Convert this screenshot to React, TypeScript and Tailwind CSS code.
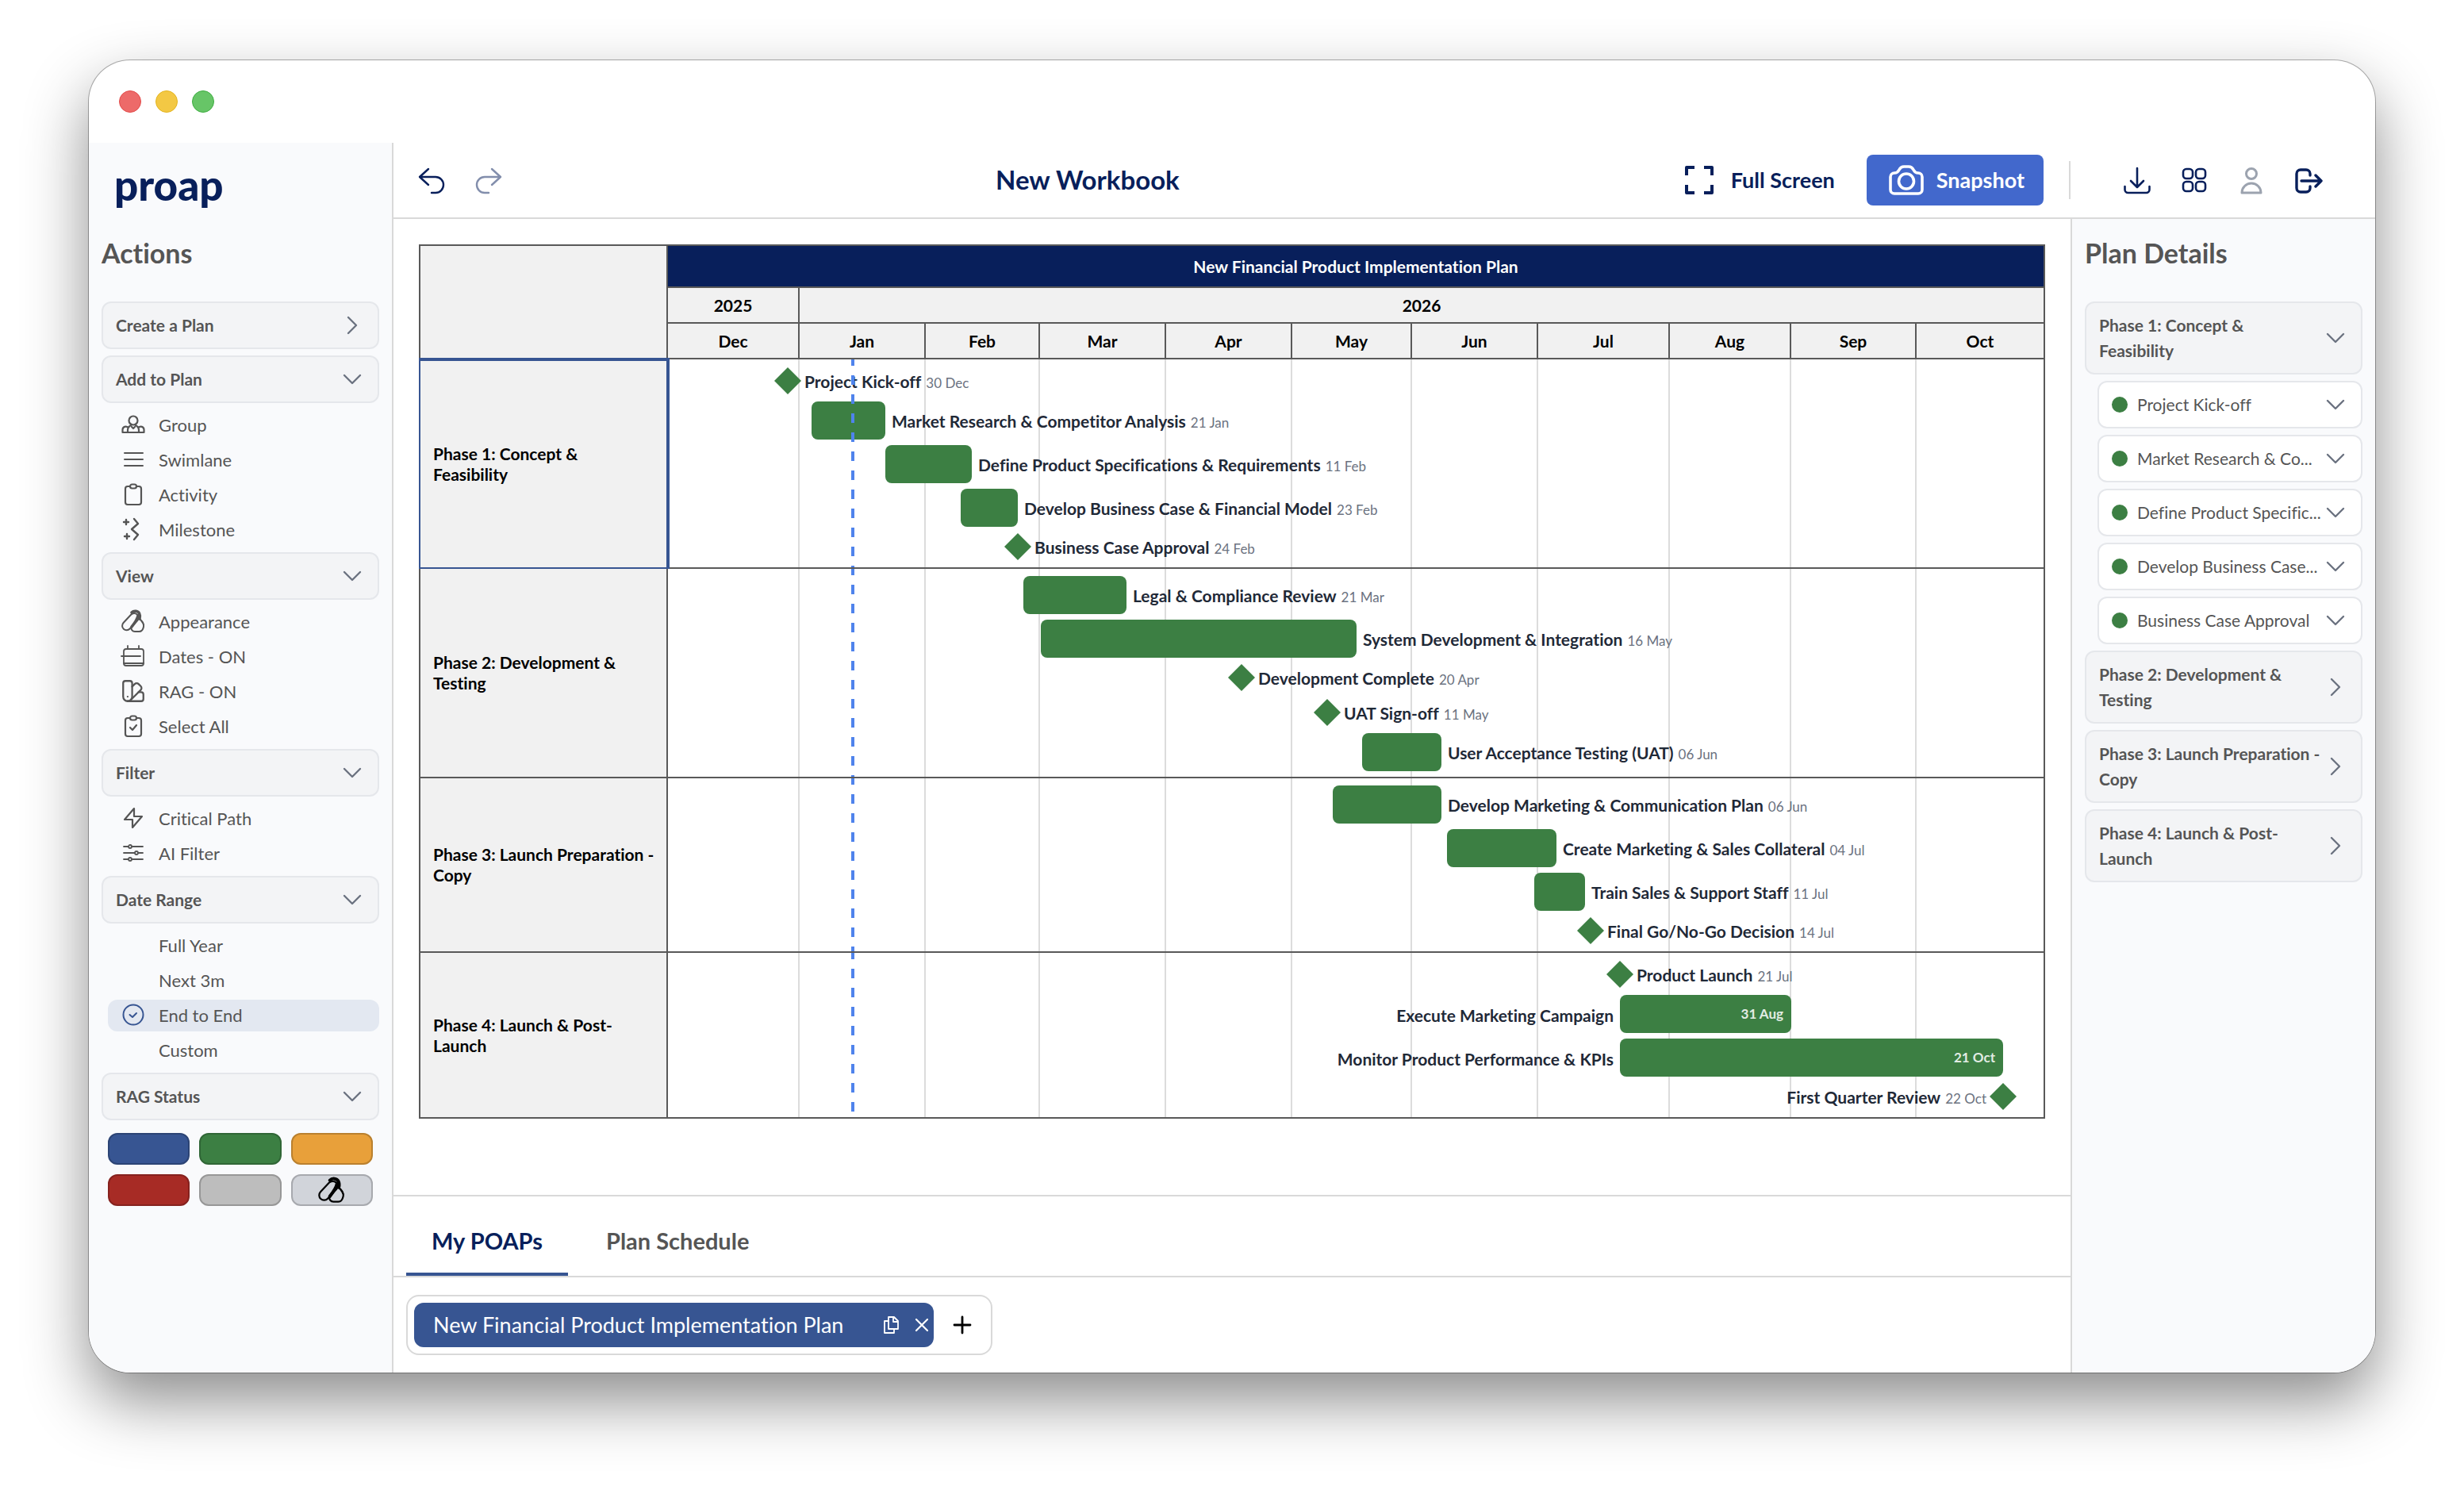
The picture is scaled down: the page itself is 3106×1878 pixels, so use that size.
import { Fragment } from "react";
import type { ReactNode } from "react";
import { SwatchBook } from "lucide-react";
import { clsx } from "clsx";

// Width of the timeline in plan units; every start/end below is in the same unit.
const SPAN = 1734;
const pct = (n: number) => `${(n / SPAN) * 100}%`;

const MONTH_COLS = "grid grid-cols-[166fr_159fr_144fr_159fr_159fr_151fr_159fr_166fr_153fr_158fr_160fr]";
const MONTHS = ["Dec", "Jan", "Feb", "Mar", "Apr", "May", "Jun", "Jul", "Aug", "Sep", "Oct"];
const TODAY = 231;

// `short` is the name used in the narrow details panel
type Task = { name: string; short?: string; date: string; start: number; end?: number; side?: "left" };
type Phase = { name: string; tasks: Task[] };

const PHASES: Phase[] = [
  {
    name: "Phase 1: Concept & Feasibility",
    tasks: [
      { name: "Project Kick-off", date: "30 Dec", start: 151 },
      { name: "Market Research & Competitor Analysis", short: "Market Research & Co...", date: "21 Jan", start: 181, end: 274 },
      { name: "Define Product Specifications & Requirements", short: "Define Product Specific...", date: "11 Feb", start: 274, end: 383 },
      { name: "Develop Business Case & Financial Model", short: "Develop Business Case...", date: "23 Feb", start: 369, end: 441 },
      { name: "Business Case Approval", date: "24 Feb", start: 441 },
    ],
  },
  {
    name: "Phase 2: Development & Testing",
    tasks: [
      { name: "Legal & Compliance Review", date: "21 Mar", start: 448, end: 578 },
      { name: "System Development & Integration", date: "16 May", start: 470, end: 868 },
      { name: "Development Complete", date: "20 Apr", start: 723 },
      { name: "UAT Sign-off", date: "11 May", start: 831 },
      { name: "User Acceptance Testing (UAT)", date: "06 Jun", start: 875, end: 975 },
    ],
  },
  {
    name: "Phase 3: Launch Preparation - Copy",
    tasks: [
      { name: "Develop Marketing & Communication Plan", date: "06 Jun", start: 838, end: 975 },
      { name: "Create Marketing & Sales Collateral", date: "04 Jul", start: 982, end: 1120 },
      { name: "Train Sales & Support Staff", date: "11 Jul", start: 1092, end: 1156 },
      { name: "Final Go/No-Go Decision", date: "14 Jul", start: 1163 },
    ],
  },
  {
    name: "Phase 4: Launch & Post-Launch",
    tasks: [
      { name: "Product Launch", date: "21 Jul", start: 1200 },
      { name: "Execute Marketing Campaign", date: "31 Aug", start: 1200, end: 1416, side: "left" },
      { name: "Monitor Product Performance & KPIs", date: "21 Oct", start: 1200, end: 1683, side: "left" },
      { name: "First Quarter Review", date: "22 Oct", start: 1683, side: "left" },
    ],
  },
];

const RAG = [
  { label: "Blue", cls: "bg-[#375592] border-[#2c4475]" },
  { label: "Green", cls: "bg-[#3c7f43] border-[#306636]" },
  { label: "Amber", cls: "bg-[#e8a03a] border-[#ba802e]" },
  { label: "Red", cls: "bg-[#a72b25] border-[#86221e]" },
  { label: "Grey", cls: "bg-[#bdbdbd] border-[#979797]" },
];

function Svg({ children, size = 32, stroke = 2, className }: { children: ReactNode; size?: number; stroke?: number; className?: string }) {
  return (
    <svg
      width={size}
      height={size}
      viewBox="0 0 32 32"
      fill="none"
      stroke="currentColor"
      strokeWidth={stroke}
      strokeLinecap="round"
      strokeLinejoin="round"
      className={clsx("shrink-0", className)}
      aria-hidden
    >
      {children}
    </svg>
  );
}

function BarSvg({ children, stroke = 3 }: { children: ReactNode; stroke?: number }) {
  return (
    <svg
      width={36}
      height={36}
      viewBox="0 0 36 36"
      fill="none"
      stroke="currentColor"
      strokeWidth={stroke}
      strokeLinecap="round"
      strokeLinejoin="round"
      aria-hidden
    >
      {children}
    </svg>
  );
}

function Chevron({ open }: { open: boolean }) {
  return (
    <svg width={24} height={24} viewBox="0 0 24 24" className="shrink-0" fill="none" stroke="#6b7280" strokeWidth={2.4} strokeLinecap="round" strokeLinejoin="round" aria-hidden>
      <path d={open ? "M2 7l10 10L22 7" : "M7 2l10 10L7 22"} />
    </svg>
  );
}

function AppearanceIcon({ size = 32 }: { size?: number }) {
  return (
    <Svg size={size}>
      <rect x="6.500" y="4" width="11" height="25" rx="5.500" transform="rotate(43 12 17)" />
      <path d="M24 13c3 3 6 6 5 10-.6 3-2.500 6-5.500 6H18c-3 0-5-2.500-4.500-5.500" />
      <path d="M14 5c3-3 8-2 9.500 1s1.500 4 .5 7M22 9c-1 5-4 9-8 14" strokeWidth={3.6} />
    </Svg>
  );
}

const ICONS: Record<string, ReactNode> = {
  Group: (
    <Svg stroke={2.2}>
      <circle cx="16" cy="11" r="5.5" />
      <path d="M2.500 26h27M2.500 26v-3.500a4 4 0 0 1 7-2.500M29.500 26v-3.500a4 4 0 0 0-7-2.500M9 26v-3c0-2.500 1.500-4.500 4-6M23 26v-3c0-2.500-1.500-4.500-4-6M14 19l2 2 2-2" />
    </Svg>
  ),
  Swimlane: (
    <Svg>
      <path d="M5 8h23M5 16h23M5 24h23" />
    </Svg>
  ),
  Activity: (
    <Svg stroke={2.2}>
      <path d="M12 6H9a3 3 0 0 0-3 3v17a3 3 0 0 0 3 3h14a3 3 0 0 0 3-3V9a3 3 0 0 0-3-3h-3" />
      <rect x="12" y="3.5" width="8" height="5" rx="2.5" />
    </Svg>
  ),
  Milestone: (
    <Svg stroke={2.4}>
      <path d="M7 4v6M4 7h6M8 22v6M5 25h6M17 3l5 6-8 7 8 7-5 6" />
    </Svg>
  ),
  Appearance: <AppearanceIcon />,
  "Dates - ON": (
    <Svg stroke={1.8}>
      <rect x="4" y="7" width="25" height="21" rx="3" />
      <path d="M9 3v4M23 3v4M1 16h24M4 25h25" />
    </Svg>
  ),
  "RAG - ON": <SwatchBook size={34} strokeWidth={1.6} className="-mx-px shrink-0" aria-hidden />,
  "Select All": (
    <Svg stroke={2.2}>
      <path d="M12 6H9a3 3 0 0 0-3 3v17a3 3 0 0 0 3 3h14a3 3 0 0 0 3-3V9a3 3 0 0 0-3-3h-3M12 18l3 3 5-6" />
      <rect x="12" y="3.5" width="8" height="5" rx="2.5" />
    </Svg>
  ),
  "Critical Path": (
    <Svg stroke={2.2}>
      <path d="M17 4L5 18h10v10l12-14H17z" />
    </Svg>
  ),
  "AI Filter": (
    <Svg stroke={1.8}>
      <path d="M4 8h6M14 8h14M4 16h14M22 16h6M4 24h6M14 24h14" />
      <circle cx="12" cy="8" r="2" />
      <circle cx="20" cy="16" r="2" />
      <circle cx="12" cy="24" r="2" />
    </Svg>
  ),
  "End to End": (
    <Svg className="text-[#375592]">
      <circle cx="16" cy="16" r="12.5" />
      <path d="M11.500 16l3.500 3 5-5" />
    </Svg>
  ),
};

const SECTIONS = [
  { title: "Create a Plan", open: false, items: [] },
  { title: "Add to Plan", open: true, items: ["Group", "Swimlane", "Activity", "Milestone"] },
  { title: "View", open: true, items: ["Appearance", "Dates - ON", "RAG - ON", "Select All"] },
  { title: "Filter", open: true, items: ["Critical Path", "AI Filter"] },
  { title: "Date Range", open: true, items: ["Full Year", "Next 3m", "End to End", "Custom"] },
  { title: "RAG Status", open: true, items: [] },
];

function SectionButton({ title, open }: { title: string; open: boolean }) {
  return (
    <button
      aria-expanded={open}
      className="flex min-h-[60px] w-full items-center justify-between gap-1.5 rounded-xl border-2 border-[#e5e7eb] bg-[#f3f4f6] py-3 pl-4 pr-5 text-left text-[21px] font-bold leading-8 text-[#555]"
    >
      {title}
      <Chevron open={open} />
    </button>
  );
}

function Sidebar() {
  return (
    <aside className="w-[384px] shrink-0 border-r-2 border-[#d9d9d9] bg-[#f9fafc] px-4">
      <div className="flex h-28 items-center pb-2 pl-4 text-[53px] font-black leading-none text-[#081f5b]">proap</div>
      <h2 className="mb-8 h-14 text-[34px] font-bold leading-[54px] text-[#555]">Actions</h2>
      <div className="flex flex-col gap-2 pb-4">
        {SECTIONS.map((s) => (
          <Fragment key={s.title}>
            <SectionButton title={s.title} open={s.open} />
            {s.items.length > 0 && (
              <ul className="flex flex-col gap-1 pl-2">
                {s.items.map((item) => (
                  <li key={item}>
                    <button
                      className={clsx(
                        "flex h-10 w-full items-center gap-4 rounded-xl pb-0.5 pl-4 text-[22px] text-[#555]",
                        item === "End to End" && "bg-[#e3e8f1]",
                      )}
                    >
                      <span className="flex w-8 justify-center">{ICONS[item]}</span>
                      {item}
                    </button>
                  </li>
                ))}
              </ul>
            )}
          </Fragment>
        ))}
        <div className="grid grid-cols-3 gap-3 px-2 pt-2">
          {RAG.map((r) => (
            <button key={r.label} aria-label={r.label} className={clsx("h-10 rounded-xl border-2", r.cls)} />
          ))}
          <button aria-label="Custom colour" className="flex h-10 items-center justify-center rounded-xl border-2 border-[#a7a9ae] bg-[#d1d4da] text-black">
            <AppearanceIcon size={36} />
          </button>
        </div>
      </div>
    </aside>
  );
}

function Header() {
  return (
    <header className="flex h-24 shrink-0 items-center border-b-2 border-[#d9d9d9] pl-[30px] pr-[66px] text-[#081f5b]">
      <div className="flex gap-9">
        <button aria-label="Undo">
          <BarSvg stroke={2.4}>
            <path d="M14 4L3 14l11 10M3 14h20a10 10 0 0 1 0 20h-5" />
          </BarSvg>
        </button>
        <button aria-label="Redo" className="opacity-50">
          <BarSvg stroke={2.4}>
            <path d="M22 4l11 10-11 10M33 14H13a10 10 0 0 0 0 20h5" />
          </BarSvg>
        </button>
      </div>
      <h1 className="flex-1 text-center text-[33px] font-bold">New Workbook</h1>
      <button className="flex items-center gap-[22px] px-4 text-[27px] font-bold">
        <svg width={36} height={36} viewBox="0 0 36 36" fill="none" stroke="currentColor" strokeWidth={4} strokeLinejoin="round" aria-hidden>
          <path d="M2 12V2h10M24 2h10v10M34 24v10H24M12 34H2V24" />
        </svg>
        Full Screen
      </button>
      <button className="ml-6 flex h-16 items-center gap-4 rounded-lg bg-[#4268cc] pl-7 pr-6 text-[27px] font-bold text-white">
        <svg width={44} height={38} viewBox="0 0 44 38" fill="none" stroke="currentColor" strokeWidth={3.6} strokeLinejoin="round" aria-hidden>
          <path d="M2 15a5 5 0 0 1 5-5c4 0 5-2 6-4s3-4 6-4h6c3 0 5 2 6 4s2 4 6 4a5 5 0 0 1 5 5v16a5 5 0 0 1-5 5H7a5 5 0 0 1-5-5z" />
          <circle cx="22" cy="20.5" r="9.5" />
        </svg>
        Snapshot
      </button>
      <div className="ml-8 mr-[66px] h-12 w-0.5 bg-[#d9d9d9]" />
      <div className="flex gap-9">
        <button aria-label="Download">
          <BarSvg stroke={2.6}>
            <path d="M18 3v24M10 19l8 8 8-8M2.500 26v4a4 4 0 0 0 4 4h23a4 4 0 0 0 4-4v-4" />
          </BarSvg>
        </button>
        <button aria-label="Workbooks">
          <BarSvg stroke={2.6}>
            <rect x="4" y="4" width="12" height="12" rx="4" />
            <rect x="20" y="4" width="12" height="12" rx="4" />
            <rect x="4" y="20" width="12" height="12" rx="4" />
            <rect x="20" y="20" width="12" height="12" rx="4" />
          </BarSvg>
        </button>
        <button aria-label="Account" className="text-[#9ca3af]">
          <BarSvg>
            <circle cx="18" cy="10" r="6.5" />
            <path d="M6 34a12 12 0 0 1 24 0z" />
          </BarSvg>
        </button>
        <button aria-label="Log out">
          <BarSvg stroke={3.4}>
            <path d="M20 12v-2a5 5 0 0 0-5-5H8a5 5 0 0 0-5 5v18a5 5 0 0 0 5 5h7a5 5 0 0 0 5-5v-2M9 19h25M27 12l7 7-7 7" />
          </BarSvg>
        </button>
      </div>
    </header>
  );
}

function Diamond() {
  return (
    <svg width={34} height={34} viewBox="0 0 34 34" fill="#3c7f43" className="shrink-0" aria-hidden>
      <path d="M17 0l17 17-17 17L0 17z" />
    </svg>
  );
}

function TaskRow({ task }: { task: Task }) {
  const left = task.side === "left";
  const isBar = task.end !== undefined;
  const end = task.end ?? task.start;
  const edge = left ? SPAN - end : task.start;
  const offset = isBar ? pct(edge) : `calc(${pct(edge)} - 17px)`;
  const pos = left ? { marginRight: offset } : { marginLeft: offset };

  return (
    <div className={clsx("flex items-center whitespace-nowrap", left && "flex-row-reverse", isBar ? "h-[55px] gap-2" : "h-11 gap-1")}>
      {isBar ? (
        <div
          className="flex h-12 shrink-0 items-center justify-end rounded-lg bg-[#3c7f43] pr-2.5 text-[17px] font-bold text-[#e2ece3]"
          style={{ ...pos, width: pct(end - task.start) }}
        >
          {left && task.date}
        </div>
      ) : (
        <div className="shrink-0" style={pos}>
          <Diamond />
        </div>
      )}
      <div className="flex items-baseline gap-1.5 pt-1 text-[21px] font-bold leading-6 text-[#1f2937]">
        {task.name}
        {!(left && isBar) && <span className="text-[17px] font-normal text-[#6b7280]">{task.date}</span>}
      </div>
    </div>
  );
}

function Gantt() {
  return (
    <div className="border-2 border-[#595959] text-[21px] font-bold text-black">
      <div className="flex border-b-2 border-[#595959]">
        <div className="w-[312px] shrink-0 border-r-2 border-[#595959] bg-[#f1f1f1]" />
        <div className="flex-1 bg-[#f1f1f1] text-center">
          <div className="h-[53px] border-b-2 border-[#595959] bg-[#081f5b] leading-[51px] text-white">
            New Financial Product Implementation Plan
          </div>
          <div className="grid h-[45px] grid-cols-[166fr_1568fr] border-b-2 border-[#595959] leading-[43px]">
            <div className="border-r-2 border-[#595959]">2025</div>
            <div>2026</div>
          </div>
          <div className={clsx(MONTH_COLS, "h-[43px] leading-[43px]")}>
            {MONTHS.map((m) => (
              <div key={m} className="border-r-2 border-[#595959] last:border-r-0">
                {m}
              </div>
            ))}
          </div>
        </div>
      </div>
      {PHASES.map((phase, i) => (
        <div key={phase.name} className="flex border-b-2 border-[#595959] last:border-b-0">
          <div
            className={clsx(
              "flex w-[312px] shrink-0 items-center border-r-2 bg-[#f1f1f1] pl-4 pr-2 leading-[26px]",
              i === 0 ? "z-10 border-t-2 border-[#375592] outline-2 outline-[#375592]" : "border-[#595959]",
            )}
          >
            <span className="max-w-[280px]">{phase.name}</span>
          </div>
          <div className="relative flex-1 pb-1 pt-[5px]">
            <div className={clsx(MONTH_COLS, "absolute inset-0")}>
              {MONTHS.map((m) => (
                <div key={m} className="border-r-2 border-[#dcdcdc] last:border-r-0" />
              ))}
            </div>
            <div className="relative">
              {phase.tasks.map((t) => (
                <TaskRow key={t.name} task={t} />
              ))}
            </div>
            <div
              className="absolute inset-y-0 w-1 bg-[linear-gradient(#4f83ec_12px,transparent_12px)] bg-[length:4px_24px] bg-[position:0_-4px]"
              style={{ left: pct(TODAY) }}
            />
          </div>
        </div>
      ))}
    </div>
  );
}

function PlanTabs() {
  return (
    <footer className="border-t-2 border-[#d9d9d9] pb-[22px]">
      <div className="flex gap-4 border-b-2 border-[#d9d9d9] px-4 text-[29px] font-bold" role="tablist">
        <button role="tab" aria-selected className="h-[100px] border-b-4 border-[#375592] px-8 pt-4 text-[#081f5b]">
          My POAPs
        </button>
        <button role="tab" aria-selected={false} className="h-[100px] border-b-4 border-transparent px-8 pt-4 text-[#555]">
          Plan Schedule
        </button>
      </div>
      <div className="px-4 pt-[22px]">
        <div className="inline-flex items-center rounded-2xl border-2 border-[#d9d9d9] p-2">
          <div className="flex h-14 items-center rounded-xl bg-[#375592] pl-6 pr-1 text-white">
            <button className="text-[27px]">New Financial Product Implementation Plan</button>
            <button aria-label="Duplicate plan" className="ml-12">
              <svg width={24} height={24} viewBox="0 0 24 24" fill="none" stroke="currentColor" strokeWidth={1.8} strokeLinejoin="round" aria-hidden>
                <path d="M9 2h7l5 5v10H9zM15 2v6h6M9 7H4v15h12v-5" />
              </svg>
            </button>
            <button aria-label="Close plan" className="ml-4">
              <svg width={22} height={22} viewBox="0 0 22 22" stroke="currentColor" strokeWidth={2.2} strokeLinecap="round" aria-hidden>
                <path d="M4 4l14 14M18 4L4 18" />
              </svg>
            </button>
          </div>
          <button aria-label="Add plan" className="pl-6 pr-4 text-black">
            <svg width={24} height={24} viewBox="0 0 24 24" stroke="currentColor" strokeWidth={2.8} strokeLinecap="round" aria-hidden>
              <path d="M12 2v20M2 12h20" />
            </svg>
          </button>
        </div>
      </div>
    </footer>
  );
}

function PlanDetails() {
  return (
    <aside className="w-[384px] shrink-0 border-l-2 border-[#d9d9d9] bg-[#f9fafc] px-4 pt-4">
      <h2 className="mb-8 h-14 text-[34px] font-bold leading-[54px] text-[#555]">Plan Details</h2>
      <div className="flex flex-col gap-2">
        {PHASES.map((p, i) => (
          <Fragment key={p.name}>
            <SectionButton title={p.name} open={i === 0} />
            {i === 0 &&
              p.tasks.map((t) => (
                <div key={t.name} className="pl-4">
                  <button
                    aria-expanded
                    title={t.name}
                    className="flex h-[60px] w-full items-center rounded-xl border-2 border-[#e5e7eb] bg-white pl-4 pr-5 text-left text-[21px] text-[#555]"
                  >
                    <span className="mr-3 h-5 w-5 shrink-0 rounded-full bg-[#3c7f43]" />
                    <span className="flex-1 whitespace-nowrap">{t.short ?? t.name}</span>
                    <Chevron open />
                  </button>
                </div>
              ))}
          </Fragment>
        ))}
      </div>
    </aside>
  );
}

export default function App() {
  return (
    <div className="flex min-h-screen flex-col bg-white px-28 pb-[148px] pt-[76px] font-[Lato,'Open_Sans',sans-serif] [font-variant-ligatures:none]">
      <div className="flex flex-1 flex-col overflow-hidden rounded-[52px] bg-white shadow-[0_0_0_1px_rgba(0,0,0,0.3),0_36px_80px_rgba(0,0,0,0.45)]">
        <div className="flex h-[104px] shrink-0 items-center gap-[18px] pl-[38px]">
          <span className="h-7 w-7 rounded-full border border-[#e24b4a] bg-[#ed6a69]" />
          <span className="h-7 w-7 rounded-full border border-[#e3b41f] bg-[#f3c844]" />
          <span className="h-7 w-7 rounded-full border border-[#3fae42] bg-[#67c567]" />
        </div>
        <div className="flex flex-1">
          <Sidebar />
          <div className="flex min-w-0 flex-1 flex-col">
            <Header />
            <div className="flex flex-1">
              <main className="flex min-w-0 flex-1 flex-col">
                <div className="flex-1 p-8">
                  <Gantt />
                </div>
                <PlanTabs />
              </main>
              <PlanDetails />
            </div>
          </div>
        </div>
      </div>
    </div>
  );
}
